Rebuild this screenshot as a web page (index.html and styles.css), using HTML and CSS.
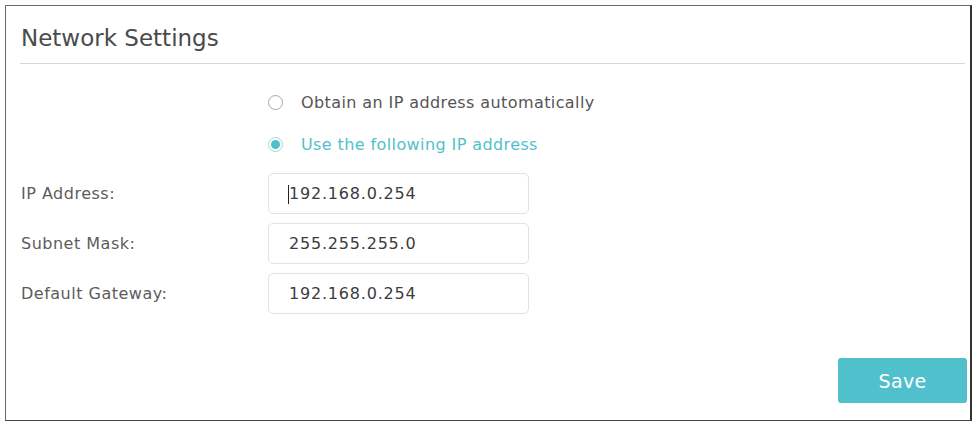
FILE: index.html
```html
<!DOCTYPE html>
<html lang="en">
<head>
<meta charset="utf-8">
<title>Network Settings</title>
<link rel="stylesheet" href="styles.css">
</head>
<body>
<div class="panel">
  <div class="header">
    <h1 class="title">Network Settings</h1>
  </div>
  <div class="form">
    <div class="row radio-row">
      <div class="label"></div>
      <div class="radio-option">
        <span class="radio"></span>
        <span class="radio-text">Obtain an IP address automatically</span>
      </div>
    </div>
    <div class="row radio-row">
      <div class="label"></div>
      <div class="radio-option selected">
        <span class="radio"><span class="dot"></span></span>
        <span class="radio-text">Use the following IP address</span>
      </div>
    </div>
    <div class="fields">
      <div class="row field-row">
        <div class="label">IP Address:</div>
        <div class="field"><span class="caret"></span>192.168.0.254</div>
      </div>
      <div class="row field-row">
        <div class="label">Subnet Mask:</div>
        <div class="field">255.255.255.0</div>
      </div>
      <div class="row field-row">
        <div class="label">Default Gateway:</div>
        <div class="field">192.168.0.254</div>
      </div>
    </div>
  </div>
  <div class="footer">
    <button class="save" type="button">Save</button>
  </div>
</div>
</body>
</html>
```

FILE: styles.css
```css
* { box-sizing: border-box; }
html, body {
  margin: 0;
  padding: 0;
  background: #ffffff;
}
body {
  font-family: "DejaVu Sans", Verdana, sans-serif;
  color: #555555;
}
.panel {
  margin: 5px 4px 0 5px;
  height: 416px;
  border: 1px solid #6a6a6a;
  border-right: 2px solid #333333;
  border-bottom: 1px solid #444444;
  display: flex;
  flex-direction: column;
}
.header {
  margin: 0 5px 0 14px;
  height: 58px;
  border-bottom: 1px solid #d8d8d8;
  display: flex;
  align-items: flex-end;
}
.title {
  margin: 0 0 10px 1px;
  font-size: 23px;
  font-weight: normal;
  line-height: 30px;
  color: #4a4a4a;
}
.form {
  padding-top: 17px;
}
.row {
  display: flex;
  align-items: center;
}
.label {
  width: 262px;
  padding-left: 15px;
  font-size: 16px;
  letter-spacing: 0.5px;
  color: #5c5c5c;
}
.radio-row {
  height: 42px;
}
.radio-option {
  display: flex;
  align-items: center;
  gap: 18px;
  font-size: 16px;
  letter-spacing: 0.4px;
  color: #555555;
}
.radio {
  width: 15px;
  height: 15px;
  border-radius: 50%;
  border: 1px solid #a8a8a8;
  display: flex;
  align-items: center;
  justify-content: center;
}
.selected .radio {
  border-color: #a6d4da;
}
.dot {
  width: 9px;
  height: 9px;
  border-radius: 50%;
  background: #4fbfca;
}
.selected .radio-text {
  color: #52bfca;
}
.fields {
  margin-top: 8px;
  display: flex;
  flex-direction: column;
  gap: 9px;
}
.field-row {
  height: 41px;
}
.field {
  width: 261px;
  height: 41px;
  border: 1px solid #e2e2e2;
  border-radius: 5px;
  padding-left: 20px;
  display: flex;
  align-items: center;
  font-size: 16px;
  letter-spacing: 0.8px;
  color: #3c3c3c;
  position: relative;
}
.caret {
  position: absolute;
  left: 19px;
  top: 11px;
  width: 1px;
  height: 19px;
  background: #222222;
}
.footer {
  margin-top: auto;
  margin-bottom: 17px;
  padding-right: 3px;
  display: flex;
  justify-content: flex-end;
}
.save {
  width: 129px;
  height: 45px;
  border: none;
  border-radius: 3px;
  background: #4fc0cc;
  color: #ffffff;
  font-family: "DejaVu Sans", Verdana, sans-serif;
  font-size: 19px;
  letter-spacing: 0.3px;
  padding: 0;
}
```
